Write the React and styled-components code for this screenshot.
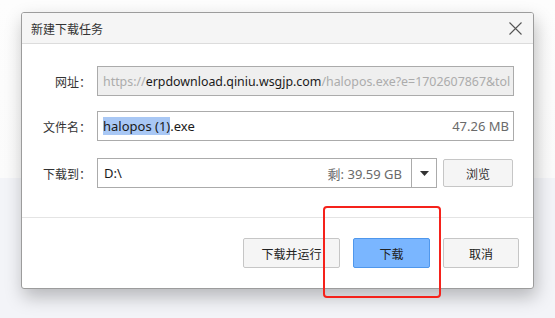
import React from 'react';
import styled, { createGlobalStyle } from 'styled-components';

const GlobalStyle = createGlobalStyle`
    body {
        margin: 0;
        font-family: "Noto Sans", "Noto Sans CJK SC", sans-serif;
    }
`

export default function App() {
    return (
        <Page>
            <GlobalStyle />
            <Dialog>
                <TitleBar>
                    <Title>新建下载任务</Title>
                    <CloseIcon width="13" height="13" viewBox="0 0 13 13">
                        <path d="M0.5 0.5 L12.5 12.5 M12.5 0.5 L0.5 12.5" stroke="#555" strokeWidth="1.1" fill="none" />
                    </CloseIcon>
                </TitleBar>
                <Body>
                    <Row>
                        <Label>网址：</Label>
                        <Field readOnly size={12.4}>
                            <Muted>https://</Muted>
                            <span>erpdownload.qiniu.wsgjp.com</span>
                            <Muted>/halopos.exe?e=1702607867&tol</Muted>
                        </Field>
                    </Row>
                    <Row top={15}>
                        <Label>文件名：</Label>
                        <Field>
                            <Selected>halopos (1)</Selected>
                            <span>.exe</span>
                            <Side>47.26 MB</Side>
                        </Field>
                    </Row>
                    <Row top={17}>
                        <Label>下载到：</Label>
                        <PathBox>
                            <PathText>
                                <span>D:\</span>
                                <Side>剩: 39.59 GB</Side>
                            </PathText>
                            <DropButton>
                                <svg width="9" height="5" viewBox="0 0 9 5">
                                    <path d="M0 0 L9 0 L4.5 5 Z" fill="#333" />
                                </svg>
                            </DropButton>
                        </PathBox>
                        <Browse>浏览</Browse>
                    </Row>
                </Body>
                <Footer>
                    <Button width={97}>下载并运行</Button>
                    <Button width={77} primary>下载</Button>
                    <Button width={76}>取消</Button>
                </Footer>
            </Dialog>
            <Highlight />
        </Page>
    )
}

const Page = styled.div`
    position: relative;
    width: 555px;
    height: 318px;
    box-sizing: border-box;
    padding: 12px 0 0 21px;
    overflow: hidden;
    background: linear-gradient(to bottom, #fdfdfd 0px, #fbfbfb 178px, #f3f4f8 178px, #f3f4f8 100%);
`
const Dialog = styled.div`
    width: 513px;
    height: 277px;
    box-sizing: border-box;
    border: 1px solid #9c9c9c;
    border-radius: 3px;
    background: #ffffff;
    box-shadow: 2px 8px 18px rgba(0, 0, 0, 0.25);
    display: flex;
    flex-direction: column;
    overflow: hidden;
`
const TitleBar = styled.div`
    height: 31px;
    box-sizing: border-box;
    background: #f5f5f5;
    border-bottom: 1px solid #dcdcdc;
    display: flex;
    align-items: center;
    justify-content: space-between;
    padding: 0 11px 0 9px;
`
const Title = styled.div`
    font-size: 12px;
    color: #333;
    font-family: "Noto Sans CJK SC", sans-serif;
`
const CloseIcon = styled.svg`
    display: block;
`
const Body = styled.div`
    height: 173px;
    box-sizing: border-box;
    padding-top: 22px;
    display: flex;
    flex-direction: column;
`
const Row = styled.div`
    display: flex;
    align-items: center;
    margin-top: ${props => props.top || 0}px;
`
const Label = styled.div`
    width: 69px;
    margin-right: 6px;
    text-align: right;
    font-size: 12px;
    color: #333;
    font-family: "Noto Sans CJK SC", sans-serif;
`
const Field = styled.div`
    width: 417px;
    height: 30px;
    box-sizing: border-box;
    border: 1px solid #ababab;
    background: ${props => props.readOnly ? '#efefef' : '#ffffff'};
    display: flex;
    align-items: center;
    padding: 0 4px 0 5px;
    font-size: ${props => props.size || 13}px;
    color: #1a1a1a;
    white-space: nowrap;
    overflow: hidden;
`
const Muted = styled.span`
    color: #acacac;
`
const Selected = styled.span`
    background: #a9c8f5;
    line-height: 18px;
`
const Side = styled.span`
    margin-left: auto;
    color: #6a6a6a;
`
const PathBox = styled.div`
    width: 340px;
    height: 30px;
    box-sizing: border-box;
    border: 1px solid #ababab;
    display: flex;
`
const PathText = styled.div`
    flex: 1;
    display: flex;
    align-items: center;
    padding: 0 9px 0 6px;
    font-size: 13px;
    color: #1a1a1a;
    border-right: 1px solid #ababab;
`
const DropButton = styled.div`
    width: 24px;
    display: flex;
    align-items: center;
    justify-content: center;
`
const Browse = styled.div`
    width: 70px;
    height: 28px;
    margin-left: 6px;
    box-sizing: border-box;
    border: 1px solid #c6c6c6;
    border-radius: 2px;
    background: #f5f5f5;
    display: flex;
    align-items: center;
    justify-content: center;
    font-size: 12px;
    color: #333;
    font-family: "Noto Sans CJK SC", sans-serif;
`
const Footer = styled.div`
    flex: 1;
    border-top: 1px solid #e4e4e4;
    display: flex;
    justify-content: flex-end;
    align-items: flex-start;
    gap: 13px;
    padding: 20px 14px 0 0;
`
const Button = styled.div`
    width: ${props => props.width}px;
    height: 30px;
    box-sizing: border-box;
    border: 1px solid ${props => props.primary ? '#4f97ec' : '#c6c6c6'};
    border-radius: 2px;
    background: ${props => props.primary ? '#7ab6ff' : '#f5f5f5'};
    display: flex;
    align-items: center;
    justify-content: center;
    font-size: 12px;
    color: #222;
    font-family: "Noto Sans CJK SC", sans-serif;
`
const Highlight = styled.div`
    position: absolute;
    left: 323px;
    top: 206px;
    width: 118px;
    height: 92px;
    box-sizing: border-box;
    border: 2.5px solid #f5221b;
    border-radius: 4px;
`
